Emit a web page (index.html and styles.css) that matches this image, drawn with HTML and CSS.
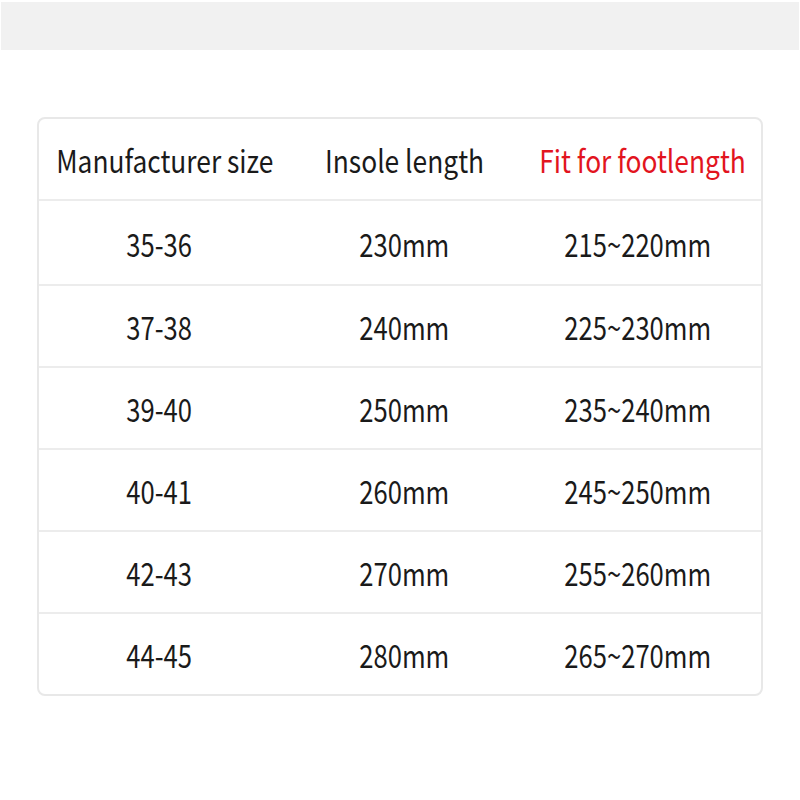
FILE: index.html
```html
<!DOCTYPE html>
<html>
<head>
<meta charset="utf-8">
<link rel="stylesheet" href="styles.css">
</head>
<body>
<div class="band"></div>
<div class="sheet">
  <div class="row head">
    <div class="cell"><span class="t">Manufacturer size</span></div>
    <div class="cell"><span class="t">Insole length</span></div>
    <div class="cell red"><span class="t">Fit for footlength</span></div>
  </div>
  <div class="row first">
    <div class="cell"><span class="t">35-36</span></div>
    <div class="cell"><span class="t">230mm</span></div>
    <div class="cell"><span class="t">215~220mm</span></div>
  </div>
  <div class="row">
    <div class="cell"><span class="t">37-38</span></div>
    <div class="cell"><span class="t">240mm</span></div>
    <div class="cell"><span class="t">225~230mm</span></div>
  </div>
  <div class="row">
    <div class="cell"><span class="t">39-40</span></div>
    <div class="cell"><span class="t">250mm</span></div>
    <div class="cell"><span class="t">235~240mm</span></div>
  </div>
  <div class="row">
    <div class="cell"><span class="t">40-41</span></div>
    <div class="cell"><span class="t">260mm</span></div>
    <div class="cell"><span class="t">245~250mm</span></div>
  </div>
  <div class="row">
    <div class="cell"><span class="t">42-43</span></div>
    <div class="cell"><span class="t">270mm</span></div>
    <div class="cell"><span class="t">255~260mm</span></div>
  </div>
  <div class="row last">
    <div class="cell"><span class="t">44-45</span></div>
    <div class="cell"><span class="t">280mm</span></div>
    <div class="cell"><span class="t">265~270mm</span></div>
  </div>
</div>
</body>
</html>
```

FILE: styles.css
```css
html, body {
  margin: 0;
  padding: 0;
  background: #ffffff;
}
body {
  font-family: "Noto Sans CJK SC", "Noto Sans", sans-serif;
  color: #1a1a1a;
}
.band {
  height: 48px;
  margin: 2px 1px 0 1px;
  background: #f1f1f1;
}
.sheet {
  margin: 67px 0 0 37px;
  width: 722px;
  border: 2px solid #e8e8e8;
  border-radius: 8px;
  display: flex;
  flex-direction: column;
}
.row {
  display: grid;
  grid-template-columns: repeat(3, minmax(0, 1fr));
  height: 80px;
  border-bottom: 2px solid #ececec;
}
.row.first {
  height: 83px;
}
.row.last {
  border-bottom: none;
}
.cell {
  display: flex;
  align-items: center;
  justify-content: center;
  min-width: 0;
  font-size: 32px;
  line-height: 1;
}
.cell:nth-child(2) {
  padding-left: 8px;
}
.cell:nth-child(3) {
  padding-right: 6px;
}
.t {
  display: inline-block;
  flex: none;
  white-space: nowrap;
  transform: scaleX(0.8);
}
.head .cell {
  font-size: 31px;
}
.head .t {
  transform: scaleX(0.85);
}
.head .cell:first-child {
  padding-left: 10px;
}
.head .cell:nth-child(2) {
  padding-left: 10px;
}
.head .cell:nth-child(3) {
  padding-right: 0;
  padding-left: 4px;
}
.red {
  color: #e2141e;
}
```
